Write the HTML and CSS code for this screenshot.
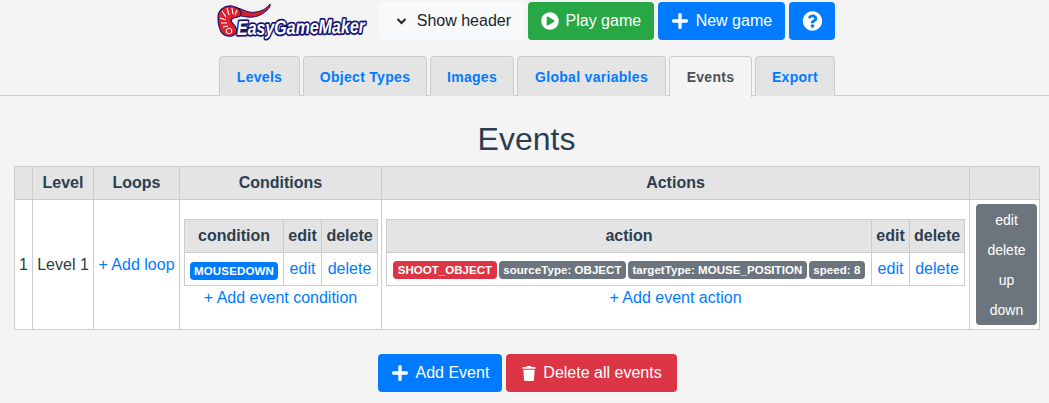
FILE: index.html
```html
<!DOCTYPE html>
<html lang="en">
<head>
<meta charset="utf-8">
<title>Events</title>
<link rel="stylesheet" href="styles.css">
</head>
<body>
<header class="topbar">
  <svg class="logo" viewBox="0 0 150 36" width="150" height="36" aria-label="EasyGameMaker">
    <path class="logo-tail" d="M15 4C24 4 30 11 39 9C45 8 49 6 53 1C54 3 52 6 49 8C45 12 38 15 30 14C24 13 20 12 16 13Z"/>
    <path class="logo-body" d="M1 14C1 7 8 2 15 3C21 4 25 8 24 12C22 15 17 14 15 16C13 18 15 20 18 23C21 27 20 31 15 33C9 34 4 31 3 26C1 22 1 18 1 14Z"/>
    <path class="logo-stripes" d="M5 8L9 14M10 5L12 12M15 5L16 11M20 7L18 12M3 15L9 17M4 20L10 20M6 24L11 23"/>
    <circle class="logo-eye" cx="12" cy="28" r="2.800"/>
    <text class="logo-text" x="20" y="31" textLength="128" lengthAdjust="spacingAndGlyphs" transform="rotate(-1 80 30)">EasyGameMaker</text>
  </svg>
  <button class="btn btn-light"><svg class="ico" viewBox="0 0 18 18"><path class="chev" d="M5.500 7l4 4 4-4"/></svg>Show header</button>
  <button class="btn btn-green"><svg class="ico" viewBox="0 0 512 512"><path d="M256 8C119 8 8 119 8 256s111 248 248 248 248-111 248-248S393 8 256 8zm115.700 272l-176 101c-15.800 8.800-35.700-2.500-35.700-21V152c0-18.400 19.800-29.800 35.700-21l176 107c16.400 9.200 16.400 32.900 0 42z"/></svg>Play game</button>
  <button class="btn btn-blue"><svg class="ico" viewBox="0 0 448 512"><path d="M416 208H272V64c0-17.670-14.330-32-32-32h-32c-17.670 0-32 14.330-32 32v144H32c-17.670 0-32 14.330-32 32v32c0 17.670 14.330 32 32 32h144v144c0 17.670 14.330 32 32 32h32c17.670 0 32-14.330 32-32V304h144c17.670 0 32-14.330 32-32v-32c0-17.670-14.330-32-32-32z"/></svg>New game</button>
  <button class="btn btn-blue" aria-label="Help"><svg class="ico ico-wide" viewBox="0 0 512 512"><path d="M504 256c0 136.997-111.043 248-248 248S8 392.997 8 256C8 119.083 119.043 8 256 8s248 111.083 248 248zM262.655 90c-54.497 0-89.255 22.957-116.549 63.758-3.536 5.286-2.353 12.415 2.715 16.258l34.699 26.310c5.205 3.947 12.621 3.008 16.665-2.122 17.864-22.658 30.113-35.797 57.303-35.797 20.429 0 45.698 13.148 45.698 32.958 0 14.976-12.363 22.667-32.534 33.976C247.128 238.528 216 254.941 216 296v4c0 6.627 5.373 12 12 12h56c6.627 0 12-5.373 12-12v-1.333c0-28.462 83.186-29.647 83.186-106.667 0-58.002-60.165-102-116.531-102zM256 338c-25.365 0-46 20.635-46 46 0 25.364 20.635 46 46 46s46-20.636 46-46c0-25.365-20.635-46-46-46z"/></svg></button>
</header>

<nav class="tabs">
  <a class="tab">Levels</a>
  <a class="tab">Object Types</a>
  <a class="tab">Images</a>
  <a class="tab">Global variables</a>
  <a class="tab tab-active">Events</a>
  <a class="tab">Export</a>
</nav>

<h1 class="title">Events</h1>

<table class="grid outer">
  <colgroup><col class="c-num"><col class="c-level"><col class="c-loops"><col class="c-cond"><col class="c-act"><col class="c-menu"></colgroup>
  <thead>
    <tr><th></th><th>Level</th><th>Loops</th><th>Conditions</th><th>Actions</th><th></th></tr>
  </thead>
  <tbody>
    <tr>
      <td>1</td>
      <td>Level 1</td>
      <td><a class="link">+ Add loop</a></td>
      <td>
        <table class="grid inner">
          <colgroup><col class="c-cond-main"><col class="c-edit"><col class="c-del"></colgroup>
          <thead><tr><th>condition</th><th>edit</th><th>delete</th></tr></thead>
          <tbody><tr>
            <td><span class="badge b-blue">MOUSEDOWN</span></td>
            <td><a class="link">edit</a></td>
            <td><a class="link">delete</a></td>
          </tr></tbody>
        </table>
        <a class="link">+ Add event condition</a>
      </td>
      <td>
        <table class="grid inner">
          <colgroup><col><col class="c-edit"><col class="c-del-action"></colgroup>
          <thead><tr><th>action</th><th>edit</th><th>delete</th></tr></thead>
          <tbody><tr>
            <td><div class="badges"><span class="badge b-red">SHOOT_OBJECT</span><span class="badge b-grey">sourceType: OBJECT</span><span class="badge b-grey">targetType: MOUSE_POSITION</span><span class="badge b-grey">speed: 8</span></div></td>
            <td><a class="link">edit</a></td>
            <td><a class="link">delete</a></td>
          </tr></tbody>
        </table>
        <a class="link">+ Add event action</a>
      </td>
      <td class="menu-cell">
        <div class="menu">
          <a class="menu-item">edit</a>
          <a class="menu-item">delete</a>
          <a class="menu-item">up</a>
          <a class="menu-item">down</a>
        </div>
      </td>
    </tr>
  </tbody>
</table>

<footer class="actions">
  <button class="btn btn-blue"><svg class="ico" viewBox="0 0 448 512"><path d="M416 208H272V64c0-17.670-14.330-32-32-32h-32c-17.670 0-32 14.330-32 32v144H32c-17.670 0-32 14.330-32 32v32c0 17.670 14.330 32 32 32h144v144c0 17.670 14.330 32 32 32h32c17.670 0 32-14.330 32-32V304h144c17.670 0 32-14.330 32-32v-32c0-17.670-14.330-32-32-32z"/></svg>Add Event</button>
  <button class="btn btn-red"><svg class="ico ico-trash" viewBox="0 0 448 512"><path d="M432 32H312l-9.400-18.700A24 24 0 0 0 281.100 0H166.800a23.720 23.720 0 0 0-21.400 13.300L136 32H16A16 16 0 0 0 0 48v32a16 16 0 0 0 16 16h416a16 16 0 0 0 16-16V48a16 16 0 0 0-16-16zM53.200 467a48 48 0 0 0 47.900 45h245.800a48 48 0 0 0 47.900-45L416 128H32z"/></svg>Delete all events</button>
</footer>
</body>
</html>
```

FILE: styles.css
```css
* { box-sizing: border-box; }

html, body { margin: 0; height: 403px; overflow: hidden; }

body {
  background: #f4f4f4;
  color: #343a40;
  font-family: "Liberation Sans", Arial, sans-serif;
  font-size: 16px;
  line-height: 24px;
}

.topbar {
  display: flex;
  justify-content: center;
  align-items: center;
  gap: 4px;
  padding: 2px 0 2px 3.400px;
  height: 42px;
}

.logo { margin-right: 8px; flex: none; overflow: visible; }
.logo-tail { fill: #d8202a; stroke: #14146e; stroke-width: 1; stroke-linejoin: round; }
.logo-body { fill: #e0202c; stroke: #14146e; stroke-width: 1.200; }
.logo-stripes { fill: none; stroke: #fff; stroke-width: 1.100; }
.logo-eye { fill: #e0202c; stroke: #fff; stroke-width: 1; }
.logo-text {
  font-family: "Liberation Sans", Arial, sans-serif;
  font-size: 20px;
  font-weight: 700;
  font-style: italic;
  fill: #fff;
  stroke: #14146e;
  stroke-width: 3.500px;
  paint-order: stroke;
  stroke-linejoin: round;
}

.btn {
  display: inline-flex;
  align-items: center;
  gap: 7px;
  height: 38px;
  padding: 0 12.750px;
  border: 0;
  border-radius: 4px;
  color: #fff;
  font: 16px/24px "Liberation Sans", Arial, sans-serif;
  white-space: nowrap;
}
.btn-light { background: #f8f9fa; color: #212529; }
.btn-green { background: #28a745; }
.btn-blue { background: #007bff; }
.btn-red { background: #dc3545; }

.ico { width: 18px; height: 18px; fill: currentColor; flex: none; }
.ico-wide { width: 21px; height: 20px; }
.ico-trash { width: 14px; height: 15px; margin-left: 3px; }
.chev { fill: none; stroke: currentColor; stroke-width: 2; }

.tabs {
  display: grid;
  grid-template-columns: 81px 124px 84px 149px 83px 80px;
  justify-content: center;
  gap: 3px;
  height: 54px;
  padding: 14px 0 0 5px;
  border-bottom: 1px solid #ccc;
}

.tab {
  display: block;
  height: 40px;
  border: 1px solid #ccc;
  border-bottom: 0;
  border-radius: 4px 4px 0 0;
  background: #e4e4e4;
  color: #007bff;
  font-size: 14px;
  font-weight: 700;
  line-height: 40px;
  letter-spacing: .3px;
  text-align: center;
}
.tab-active {
  height: 41px;
  background: #f4f4f4;
  color: #495057;
}

.title {
  margin: 24px 0 8px;
  padding-left: 4px;
  color: #2c3e50;
  font-size: 32px;
  font-weight: 400;
  line-height: 38px;
  text-align: center;
}

.grid {
  border-collapse: collapse;
  table-layout: fixed;
  background: #fff;
}
.grid th, .grid td {
  border: 1px solid #ccc;
  padding: 4px;
  text-align: center;
  vertical-align: middle;
}
.grid th {
  background: #e4e4e4;
  color: #2c3e50;
  font-weight: 700;
}

.outer { width: 1026px; margin: 0 14px; }
.inner { width: 100%; }
.outer > tbody > tr > td { padding: 4px; }
.outer > tbody > tr > td.menu-cell { padding: 4px 0 4px 6px; }

.c-num { width: 18px; }
.c-level { width: 61px; }
.c-loops { width: 86px; }
.c-cond { width: 202px; }
.c-act { width: 588px; }
.c-menu { width: 70px; }
.c-cond-main { width: 99px; }
.c-edit { width: 38px; }
.c-del { width: 56px; }
.c-del-action { width: 55px; }

.link { color: #007bff; }

.badges { display: flex; justify-content: center; gap: 2px; }
.badge {
  display: inline-block;
  position: relative;
  top: 1px;
  height: 18px;
  padding: 0 4.500px;
  border-radius: 4px;
  color: #fff;
  font-size: 11.500px;
  font-weight: 700;
  line-height: 18px;
  letter-spacing: .05px;
  white-space: nowrap;
  vertical-align: middle;
}
.b-blue { background: #007bff; letter-spacing: .15px; }
.b-red { background: #dc3545; }
.b-grey { background: #6c757d; }

.menu {
  display: flex;
  flex-direction: column;
  width: 61px;
  border-radius: 4px;
  background: #6c757d;
  padding: 1px 0;
}
.menu-item {
  height: 30px;
  color: #fff;
  font-size: 14px;
  line-height: 30px;
  text-align: center;
}
.menu-item:last-child { height: 29px; }

.actions {
  display: flex;
  justify-content: center;
  gap: 4px;
  margin-top: 24px;
  padding-left: 5.200px;
}
.actions .btn { padding: 0 13px; }
.actions .btn-red { padding-right: 15px; }
```
